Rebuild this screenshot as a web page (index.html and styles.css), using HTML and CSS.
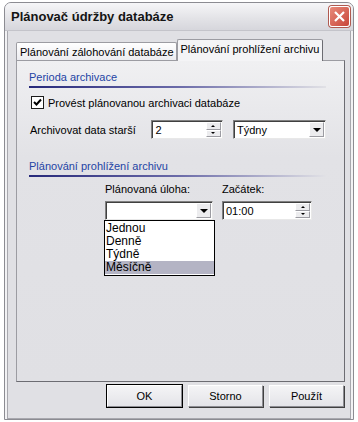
FILE: index.html
```html
<!DOCTYPE html>
<html lang="cs">
<head>
    <meta charset="UTF-8">
    <title>Plánovač údržby databáze</title>
    <link rel="stylesheet" href="styles.css">
</head>
<body>
    <div class="window">
        <div class="titlebar">
            <span class="title">Plánovač údržby databáze</span>
            <span class="close">
                <svg width="11" height="11" viewBox="0 0 11 11"><path d="M1 1 L10 10 M10 1 L1 10" stroke="#fff" stroke-width="2.2"/></svg>
            </span>
        </div>

        <div class="frame">
            <div class="tabs">
                <div class="tab">Plánování zálohování databáze</div>
                <div class="tab active">Plánování prohlížení archivu</div>
            </div>

            <div class="panel">
                <!-- Perioda archivace -->
                <div class="group-title">Perioda archivace</div>
                <div class="row check-row">
                    <span class="checkbox">
                        <svg width="9" height="9" viewBox="0 0 9 9"><path d="M1 4 L3.5 6.5 L8 1.5" stroke="#000" stroke-width="2" fill="none"/></svg>
                    </span>
                    <span>Provést plánovanou archivaci databáze</span>
                </div>
                <div class="row older-row">
                    <span class="older-label">Archivovat data starší</span>
                    <div class="spin spin-count">
                        <span class="field-text">2</span>
                        <span class="spin-btns"><span class="sb"><i class="up"></i></span><span class="sb"><i class="down"></i></span></span>
                    </div>
                    <div class="combo combo-units">
                        <span class="field-text">Týdny</span>
                        <span class="arrow"><i class="down"></i></span>
                    </div>
                </div>

                <!-- Plánování prohlížení archivu -->
                <div class="group-title second">Plánování prohlížení archivu</div>
                <div class="schedule">
                    <div class="col">
                        <label>Plánovaná úloha:</label>
                        <div class="combo combo-task">
                            <span class="field-text"></span>
                            <span class="arrow"><i class="down"></i></span>
                            <ul class="dropdown">
                                <li>Jednou</li>
                                <li>Denně</li>
                                <li>Týdně</li>
                                <li class="selected">Měsíčně</li>
                            </ul>
                        </div>
                    </div>
                    <div class="col">
                        <label>Začátek:</label>
                        <div class="spin spin-time">
                            <span class="field-text">01:00</span>
                            <span class="spin-btns"><span class="sb"><i class="up"></i></span><span class="sb"><i class="down"></i></span></span>
                        </div>
                    </div>
                </div>
            </div>

            <div class="buttons">
                <button class="default">OK</button>
                <button>Storno</button>
                <button>Použít</button>
            </div>
        </div>
    </div>
</body>
</html>
```

FILE: styles.css
```css
body {
    margin: 0;
    background: #ffffff;
    font-family: "Liberation Sans", Arial, sans-serif;
    font-size: 11px;
    color: #000;
}
.window {
    box-sizing: border-box;
    width: 350px;
    height: 418px;
    margin: 2px 0 0 4px;
    border: 1px solid #8c8c92;
    border-radius: 7px 7px 0 0;
    background: #e0e0e4;
    display: flex;
    flex-direction: column;
    overflow: hidden;
}
.titlebar {
    height: 27px;
    display: flex;
    align-items: center;
    justify-content: space-between;
    padding: 0 3px 0 6px;
    background: linear-gradient(#f6f6f8, #e2e2e6 60%, #d6d6dc);
    border-bottom: 1px solid #c4c4ca;
}
.title {
    font-weight: bold;
    font-size: 13px;
    color: #141414;
}
.close {
    width: 21px;
    height: 21px;
    box-sizing: border-box;
    border: 1px solid #fff;
    border-radius: 3px;
    background: linear-gradient(135deg, #e88a7a, #c8463a);
    display: flex;
    align-items: center;
    justify-content: center;
    box-shadow: 0 0 0 1px #b05a50;
}
.frame {
    flex: 1;
    display: flex;
    flex-direction: column;
    padding: 8px 6px 8px 9px;
    border-left: 2px solid #f2f2f4;
    border-right: 2px solid #f2f2f4;
    box-shadow: inset 1px 0 0 #a8a8ae, inset -1px 0 0 #a8a8ae, inset 0 -1px 0 #a8a8ae;
}
.tabs {
    display: flex;
    align-items: flex-end;
    height: 21px;
}
.tab {
    height: 17px;
    padding: 0 2px 0 3px;
    line-height: 18px;
    border: 1px solid #9c9ca2;
    border-bottom: none;
    border-radius: 2px 2px 0 0;
    background: linear-gradient(#ffffff, #ececf0);
    white-space: nowrap;
}
.tab.active {
    height: 21px;
    line-height: 18px;
    background: #f4f4f6;
    margin-bottom: -1px;
    position: relative;
    z-index: 1;
    padding: 0 3px;
    border-right: 1px solid #6c6c72;
}
.panel {
    height: 322px;
    box-sizing: border-box;
    border: 1px solid #9c9ca2;
    border-right-color: #6c6c72;
    border-bottom-color: #6c6c72;
    background: linear-gradient(#f0f0f2, #e2e2e6 30%, #e0e0e4);
    padding: 9px 18px 0 12px;
}
.group-title {
    color: #2444a4;
    height: 14px;
    line-height: 14px;
    padding-bottom: 2px;
    border-bottom: 2px solid transparent;
    border-image: linear-gradient(to right, #26287a, #6a6aa8 50%, #e2e2e6) 1;
}
.group-title.second {
    margin-top: 20px;
}
.row {
    display: flex;
    align-items: center;
}
.check-row {
    margin-top: 8px;
    gap: 4px;
    padding-left: 2px;
}
.checkbox {
    width: 11px;
    height: 11px;
    border: 1px solid #1c1c1c;
    background: #fff;
    display: flex;
    align-items: center;
    justify-content: center;
}
.older-row {
    margin-top: 11px;
    padding-left: 1px;
}
.older-label {
    width: 124px;
}
.spin, .combo {
    box-sizing: border-box;
    height: 19px;
    background: #fff;
    border: 1px solid #808080;
    border-right-color: #e8e8e8;
    border-bottom-color: #e8e8e8;
    box-shadow: inset 1px 1px 0 #404040;
    display: flex;
    align-items: center;
    position: relative;
}
.field-text {
    flex: 1;
    padding-left: 3px;
}
.spin-btns {
    display: flex;
    flex-direction: column;
    width: 15px;
    height: 15px;
    margin-right: 1px;
}
.sb {
    flex: 1;
    display: flex;
    align-items: center;
    justify-content: center;
    background: #ececee;
    border: 1px solid #fff;
    border-right-color: #9c9ca2;
    border-bottom-color: #9c9ca2;
}
.up {
    border-left: 2px solid transparent;
    border-right: 2px solid transparent;
    border-bottom: 2px solid #000;
}
.down {
    border-left: 2px solid transparent;
    border-right: 2px solid transparent;
    border-top: 2px solid #000;
}
.arrow {
    width: 15px;
    height: 15px;
    margin-right: 1px;
    display: flex;
    align-items: center;
    justify-content: center;
    box-sizing: border-box;
    background: #ececee;
    border: 1px solid #fff;
    border-right-color: #9c9ca2;
    border-bottom-color: #9c9ca2;
}
.arrow .down {
    border-left-width: 4px;
    border-right-width: 4px;
    border-top-width: 4px;
}
.spin-count {
    width: 73px;
}
.combo-units {
    width: 95px;
    margin-left: 10px;
}
.schedule {
    display: flex;
    padding-left: 76px;
    margin-top: 6px;
    gap: 9px;
}
.col label {
    display: block;
    height: 14px;
    margin-bottom: 4px;
}
.combo-task {
    width: 108px;
}
.spin-time {
    width: 90px;
}
.dropdown {
    position: absolute;
    left: -2px;
    top: 18px;
    width: 109px;
    margin: 0;
    padding: 1px 0 1px;
    list-style: none;
    background: #fff;
    border: 1px solid #000;
    font-size: 12px;
}
.dropdown li {
    height: 13px;
    line-height: 13px;
    padding-left: 1px;
}
.dropdown li.selected {
    background: #b4b4c4;
}
.buttons {
    display: flex;
    justify-content: flex-end;
    gap: 6px;
    margin-top: 3px;
    padding-right: 1px;
}
button {
    width: 75px;
    height: 22px;
    font-family: inherit;
    font-size: 11px;
    color: #000;
    background: linear-gradient(#f4f4f6, #e4e4e8);
    border: 1px solid #fff;
    border-right-color: #8c8c92;
    border-bottom-color: #8c8c92;
    box-shadow: 1px 1px 0 #404040;
    padding: 0;
}
button.default {
    outline: 1px solid #000;
}
```
